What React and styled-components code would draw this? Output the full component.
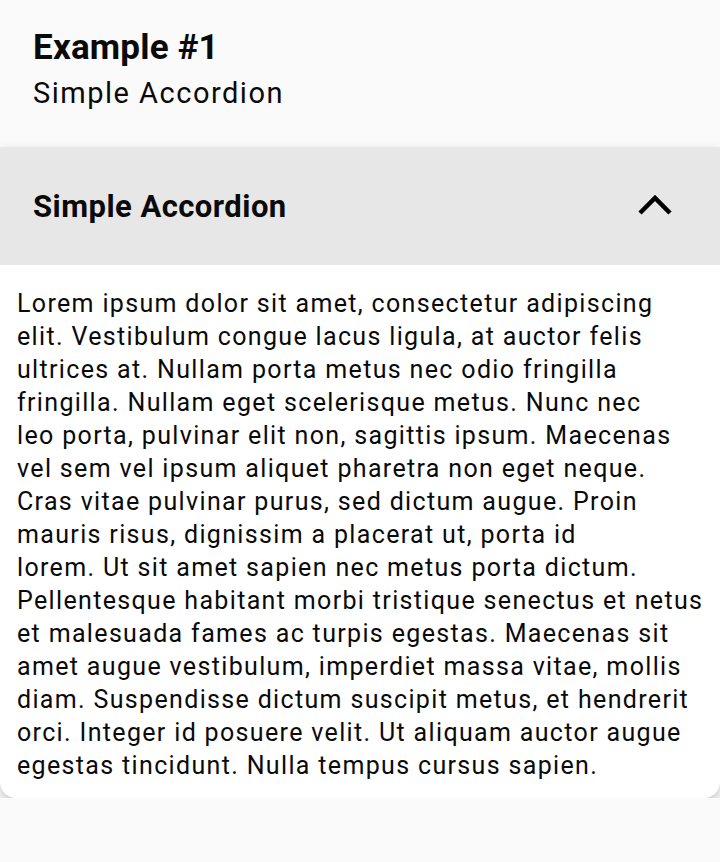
import React, {useState} from 'react';
import styled, {createGlobalStyle} from "styled-components";

const GlobalStyle = createGlobalStyle`
    body {
        margin: 0;
        background-color: #fafafa;
        font-family: Roboto, "Noto Sans", sans-serif;
        color: #0a0a0a;
    }
`
const Intro = styled.div`
    padding: 27px 33px 0 33px;
`
const Title = styled.h1`
    margin: 0;
    font-size: 35px;
    font-weight: 700;
    line-height: 42px;
    letter-spacing: 0.2px;
`
const Subtitle = styled.div`
    margin-top: 3px;
    font-size: 29px;
    line-height: 42px;
    letter-spacing: 1.5px;
`
const Card = styled.div`
    margin-top: 33px;
    background-color: #fff;
    border-radius: 0 0 16px 16px;
    box-shadow: 0 5px 12px rgba(0, 0, 0, 0.2);
    overflow: hidden;
`
const Header = styled.div`
    height: 118px;
    padding: 0 33px;
    background-color: #e7e7e7;
    display: flex;
    align-items: center;
    justify-content: space-between;
    cursor: pointer;
`
const HeaderTitle = styled.span`
    font-size: 31px;
    font-weight: 700;
    letter-spacing: 0.45px;
`
const Chevron = styled.svg`
    width: 36px;
    height: 36px;
    margin-right: 14px;
    transform: rotate(${props => props.$open ? 0 : 180}deg);
`
const Content = styled.div`
    padding: 22px 8px 16px 17px;
    font-size: 25px;
    line-height: 33px;
    letter-spacing: 1.34px;
    white-space: nowrap;
`
const Line = styled.div``

/*строки разбиты так же, как на референсе*/
const lines = [
    'Lorem ipsum dolor sit amet, consectetur adipiscing',
    'elit. Vestibulum congue lacus ligula, at auctor felis',
    'ultrices at. Nullam porta metus nec odio fringilla',
    'fringilla. Nullam eget scelerisque metus. Nunc nec',
    'leo porta, pulvinar elit non, sagittis ipsum. Maecenas',
    'vel sem vel ipsum aliquet pharetra non eget neque.',
    'Cras vitae pulvinar purus, sed dictum augue. Proin',
    'mauris risus, dignissim a placerat ut, porta id',
    'lorem. Ut sit amet sapien nec metus porta dictum.',
    'Pellentesque habitant morbi tristique senectus et netus',
    'et malesuada fames ac turpis egestas. Maecenas sit',
    'amet augue vestibulum, imperdiet massa vitae, mollis',
    'diam. Suspendisse dictum suscipit metus, et hendrerit',
    'orci. Integer id posuere velit. Ut aliquam auctor augue',
    'egestas tincidunt. Nulla tempus cursus sapien.'
]

const App = () => {
    const [open, setOpen] = useState(true)
    return (
        <>
            <GlobalStyle/>
            <Intro>
                <Title>Example #1</Title>
                <Subtitle>Simple Accordion</Subtitle>
            </Intro>
            <Card>
                <Header onClick={() => setOpen(!open)}>
                    <HeaderTitle>Simple Accordion</HeaderTitle>
                    <Chevron $open={open} viewBox="0 0 36 36">
                        <polyline points="3,25 18,10 33,25" fill="none" stroke="#000" strokeWidth="4.5"/>
                    </Chevron>
                </Header>
                {open && (
                    <Content>
                        {lines.map((line, i) => <Line key={i}>{line}</Line>)}
                    </Content>
                )}
            </Card>
        </>
    )
}
export default App
